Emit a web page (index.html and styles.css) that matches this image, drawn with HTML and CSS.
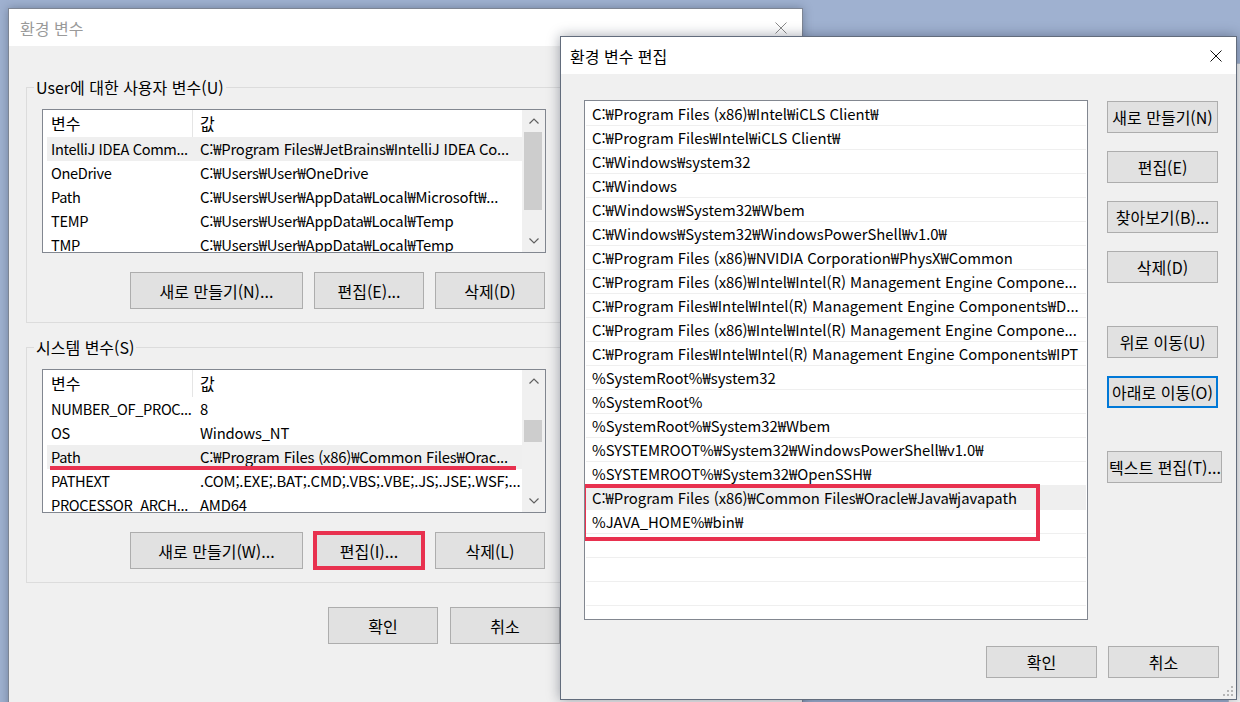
FILE: index.html
```html
<!DOCTYPE html>
<html lang="ko">
<head>
<meta charset="utf-8">
<title>환경 변수</title>
<link rel="stylesheet" href="styles.css">
</head>
<body>
<div class="desktop">
  <div class="win back-win"></div>

  <section class="win env-win">
    <header class="titlebar inactive">
      <span class="title">환경 변수</span>
      <svg class="close" width="12" height="12" viewBox="0 0 12 12"><path d="M0.5 0.5L11.5 11.5M11.5 0.5L0.5 11.5" stroke="currentColor" stroke-width="1" fill="none"/></svg>
    </header>
    <div class="env-body">
      <fieldset class="group">
        <legend>User에 대한 사용자 변수(U)</legend>
        <div class="group-inner">
          <div class="listview">
            <div class="lv-main">
              <div class="lv-head"><span class="c1">변수</span><span class="c2">값</span></div>
              <div class="lv-row sel"><span class="c1">IntelliJ IDEA Comm...</span><span class="c2">C:₩Program Files₩JetBrains₩IntelliJ IDEA Co...</span></div>
              <div class="lv-row"><span class="c1">OneDrive</span><span class="c2">C:₩Users₩User₩OneDrive</span></div>
              <div class="lv-row"><span class="c1">Path</span><span class="c2">C:₩Users₩User₩AppData₩Local₩Microsoft₩...</span></div>
              <div class="lv-row"><span class="c1">TEMP</span><span class="c2">C:₩Users₩User₩AppData₩Local₩Temp</span></div>
              <div class="lv-row"><span class="c1">TMP</span><span class="c2">C:₩Users₩User₩AppData₩Local₩Temp</span></div>
            </div>
            <div class="vscroll">
              <div class="sb-btn"><svg width="10" height="6" viewBox="0 0 10 6"><path d="M0.5 5.5L5 1L9.5 5.5" fill="none" stroke="#606060" stroke-width="1.2"/></svg></div>
              <div class="sb-track"><div class="thumb thumb-user"></div></div>
              <div class="sb-btn"><svg width="10" height="6" viewBox="0 0 10 6"><path d="M0.5 0.5L5 5L9.5 0.5" fill="none" stroke="#606060" stroke-width="1.2"/></svg></div>
            </div>
          </div>
          <div class="btnrow">
            <button class="btn btn-wide">새로 만들기(N)...</button>
            <button class="btn">편집(E)...</button>
            <button class="btn">삭제(D)</button>
          </div>
        </div>
      </fieldset>

      <fieldset class="group group-sys">
        <legend>시스템 변수(S)</legend>
        <div class="group-inner">
          <div class="listview">
            <div class="lv-main">
              <div class="lv-head"><span class="c1">변수</span><span class="c2">값</span></div>
              <div class="lv-row"><span class="c1">NUMBER_OF_PROC...</span><span class="c2">8</span></div>
              <div class="lv-row"><span class="c1">OS</span><span class="c2">Windows_NT</span></div>
              <div class="lv-row sel mark"><span class="c1">Path</span><span class="c2">C:₩Program Files (x86)₩Common Files₩Orac...</span></div>
              <div class="lv-row"><span class="c1">PATHEXT</span><span class="c2">.COM;.EXE;.BAT;.CMD;.VBS;.VBE;.JS;.JSE;.WSF;...</span></div>
              <div class="lv-row"><span class="c1">PROCESSOR_ARCH...</span><span class="c2">AMD64</span></div>
            </div>
            <div class="vscroll">
              <div class="sb-btn"><svg width="10" height="6" viewBox="0 0 10 6"><path d="M0.5 5.5L5 1L9.5 5.5" fill="none" stroke="#606060" stroke-width="1.2"/></svg></div>
              <div class="sb-track"><div class="thumb thumb-sys"></div></div>
              <div class="sb-btn"><svg width="10" height="6" viewBox="0 0 10 6"><path d="M0.5 0.5L5 5L9.5 0.5" fill="none" stroke="#606060" stroke-width="1.2"/></svg></div>
            </div>
          </div>
          <div class="btnrow">
            <button class="btn btn-wide">새로 만들기(W)...</button>
            <button class="btn btn-marked">편집(I)...</button>
            <button class="btn">삭제(L)</button>
          </div>
        </div>
      </fieldset>

      <div class="okrow">
        <button class="btn">확인</button>
        <button class="btn">취소</button>
      </div>
    </div>
  </section>

  <section class="win edit-win">
    <header class="titlebar active">
      <span class="title">환경 변수 편집</span>
      <svg class="close" width="12" height="12" viewBox="0 0 12 12"><path d="M0.5 0.5L11.5 11.5M11.5 0.5L0.5 11.5" stroke="currentColor" stroke-width="1" fill="none"/></svg>
    </header>
    <div class="edit-body">
      <div class="edit-main">
        <div class="pathlist">
          <div class="pl-row">C:₩Program Files (x86)₩Intel₩iCLS Client₩</div>
          <div class="pl-row">C:₩Program Files₩Intel₩iCLS Client₩</div>
          <div class="pl-row">C:₩Windows₩system32</div>
          <div class="pl-row">C:₩Windows</div>
          <div class="pl-row">C:₩Windows₩System32₩Wbem</div>
          <div class="pl-row">C:₩Windows₩System32₩WindowsPowerShell₩v1.0₩</div>
          <div class="pl-row">C:₩Program Files (x86)₩NVIDIA Corporation₩PhysX₩Common</div>
          <div class="pl-row">C:₩Program Files (x86)₩Intel₩Intel(R) Management Engine Compone...</div>
          <div class="pl-row">C:₩Program Files₩Intel₩Intel(R) Management Engine Components₩D...</div>
          <div class="pl-row">C:₩Program Files (x86)₩Intel₩Intel(R) Management Engine Compone...</div>
          <div class="pl-row">C:₩Program Files₩Intel₩Intel(R) Management Engine Components₩IPT</div>
          <div class="pl-row">%SystemRoot%₩system32</div>
          <div class="pl-row">%SystemRoot%</div>
          <div class="pl-row">%SystemRoot%₩System32₩Wbem</div>
          <div class="pl-row">%SYSTEMROOT%₩System32₩WindowsPowerShell₩v1.0₩</div>
          <div class="pl-row">%SYSTEMROOT%₩System32₩OpenSSH₩</div>
          <div class="pl-row sel">C:₩Program Files (x86)₩Common Files₩Oracle₩Java₩javapath</div>
          <div class="pl-row">%JAVA_HOME%₩bin₩</div>
          <div class="pl-row"></div>
          <div class="pl-row"></div>
          <div class="pl-row"></div>
          <div class="pl-row"></div>
          <div class="red-box"></div>
        </div>
        <div class="side-btns">
          <button class="btn sbtn">새로 만들기(N)</button>
          <button class="btn sbtn">편집(E)</button>
          <button class="btn sbtn">찾아보기(B)...</button>
          <button class="btn sbtn">삭제(D)</button>
          <button class="btn sbtn gap-lg">위로 이동(U)</button>
          <button class="btn sbtn focus">아래로 이동(O)</button>
          <button class="btn sbtn sbtn-wide gap-lg">텍스트 편집(T)...</button>
        </div>
      </div>
      <div class="edit-foot">
        <button class="btn fbtn">확인</button>
        <button class="btn fbtn">취소</button>
      </div>
    </div>
    <svg class="grip" width="12" height="12" viewBox="0 0 12 12">
      <rect x="9" y="1" width="2" height="2"/><rect x="5" y="5" width="2" height="2"/><rect x="9" y="5" width="2" height="2"/>
      <rect x="1" y="9" width="2" height="2"/><rect x="5" y="9" width="2" height="2"/><rect x="9" y="9" width="2" height="2"/>
    </svg>
  </section>
</div>
</body>
</html>
```

FILE: styles.css
```css
* { box-sizing: border-box; }
html, body { margin: 0; padding: 0; }
body {
  width: 1240px;
  height: 702px;
  overflow: hidden;
  font-family: "Noto Sans CJK KR", "Noto Sans", sans-serif;
  font-size: 16px;
  color: #000;
}
.desktop {
  position: relative;
  width: 1240px;
  height: 702px;
  overflow: hidden;
  background: #9fb1d0;
}

/* windows */
.win {
  position: absolute;
  background: #f0f0f0;
  display: flex;
  flex-direction: column;
}
.back-win {
  left: 1228px;
  top: 63px;
  width: 120px;
  height: 700px;
  background: #f7f7f7;
  border: 1px solid #b9c1cd;
}
.env-win {
  left: 8px;
  top: 8px;
  width: 795px;
  height: 760px;
  border: 1px solid #7d8593;
  box-shadow: 0 0 9px rgba(30, 40, 60, 0.35);
}
.edit-win {
  left: 560px;
  top: 36px;
  width: 677px;
  height: 664px;
  border: 1px solid #626c7c;
  box-shadow: 0 0 12px rgba(20, 30, 50, 0.4);
}

.titlebar {
  flex: none;
  height: 37px;
  background: #fff;
  display: flex;
  align-items: center;
  justify-content: space-between;
  padding: 0 15px 0 11px;
}
.titlebar .title { line-height: 20px; }
.titlebar.inactive { color: #9a9a9a; }
.titlebar.inactive .close { color: #8a8a8a; }
.titlebar.active { padding-left: 9px; padding-right: 14px; }
.titlebar.active .close { color: #111; }

/* buttons */
.btn {
  font: inherit;
  color: #000;
  background: #e1e1e1;
  border: 1px solid #adadad;
  border-radius: 0;
  padding: 0 2px;
  margin: 0;
  height: 37px;
  width: 110px;
  white-space: nowrap;
  line-height: 20px;
}
.btn-wide { width: 173px; }
.btn-marked {
  outline: 4px solid #e8314f;
  outline-offset: -3px;
}

/* left dialog body */
.env-body {
  flex: 1;
  padding: 31px 0 0 17px;
  display: flex;
  flex-direction: column;
}
.group {
  margin: 0;
  padding: 0;
  border: 1px solid #dcdcdc;
  width: 536px;
  min-width: 0;
}
.group legend {
  margin-left: 7px;
  padding: 0 2px;
  line-height: 20px;
  height: 20px;
}
.group-sys { margin-top: 14px; }
.group-inner {
  padding: 12px 15px 13px 15px;
}
.listview {
  display: flex;
  height: 144px;
  border: 1px solid #828790;
  background: #fff;
}
.lv-main {
  flex: 1;
  min-width: 0;
  overflow: hidden;
  padding-left: 4px;
}
.lv-head, .lv-row {
  display: flex;
  align-items: center;
}
.lv-head { height: 27px; }
.lv-row { height: 24px; position: relative; font-size: 14.85px; }
.lv-row.sel { background: #efefef; }
.c1, .c2 {
  white-space: nowrap;
  overflow: hidden;
  line-height: 22px;
}
.c1 { width: 146px; flex: none; padding-left: 4px; }
.lv-row .c1 { font-size: 14.6px; letter-spacing: -0.35px; }
.c2 { flex: 1; padding-left: 7px; }
.lv-row .c2 { letter-spacing: -0.2px; }
.lv-head .c1, .lv-head .c2 { height: 27px; line-height: 27px; }
.lv-head .c1 { border-right: 1px solid #e5e5e5; }
.lv-row.mark::after {
  content: "";
  position: absolute;
  left: 3px;
  top: 21px;
  width: 466px;
  height: 4px;
  background: #e8314f;
}

.vscroll {
  flex: none;
  width: 23px;
  background: #f0f0f0;
  display: flex;
  flex-direction: column;
}
.sb-btn {
  height: 22px;
  flex: none;
  display: flex;
  align-items: center;
  justify-content: center;
}
.sb-track { flex: 1; padding: 0 3px 0 2px; }
.thumb { background: #cdcdcd; }
.thumb-user { height: 78px; }
.thumb-sys { margin-top: 28px; height: 22px; }

.btnrow {
  display: flex;
  justify-content: flex-end;
  gap: 11px;
  margin-top: 19px;
  margin-right: 1px;
}
.okrow {
  width: 534px;
  display: flex;
  justify-content: flex-end;
  gap: 12px;
  margin-top: 24px;
}

/* edit dialog */
.edit-body {
  flex: 1;
  padding: 26px 17px 0 23px;
  display: flex;
  flex-direction: column;
}
.edit-main { display: flex; }
.pathlist {
  position: relative;
  width: 504px;
  height: 520px;
  border: 1px solid #828790;
  background: #fff;
  padding: 1px 1px 0 1px;
  overflow: hidden;
  flex: none;
}
.pl-row {
  height: 24px;
  border-bottom: 1px solid #efefef;
  padding-left: 6px;
  line-height: 23px;
  font-size: 14.85px;
  white-space: nowrap;
  overflow: hidden;
}
.pl-row.sel { background: #efefef; }
.red-box {
  position: absolute;
  left: -3px;
  top: 383px;
  width: 458px;
  height: 57px;
  border: 4px solid #e8314f;
}
.side-btns {
  margin-left: 19px;
  padding-top: 1px;
  display: flex;
  flex-direction: column;
  align-items: flex-start;
  gap: 18px;
}
.sbtn { height: 32px; width: 111px; padding: 0 1px; }
.sbtn-wide { width: 115px; }
.gap-lg { margin-top: 25px; }
.sbtn.focus { border: 2px solid #0078d7; }
.edit-foot {
  display: flex;
  justify-content: flex-end;
  gap: 11px;
  margin-top: 26px;
}
.fbtn { height: 32px; width: 111px; }
.grip {
  position: absolute;
  right: 2px;
  bottom: 2px;
  fill: #b5b5b5;
}
```
